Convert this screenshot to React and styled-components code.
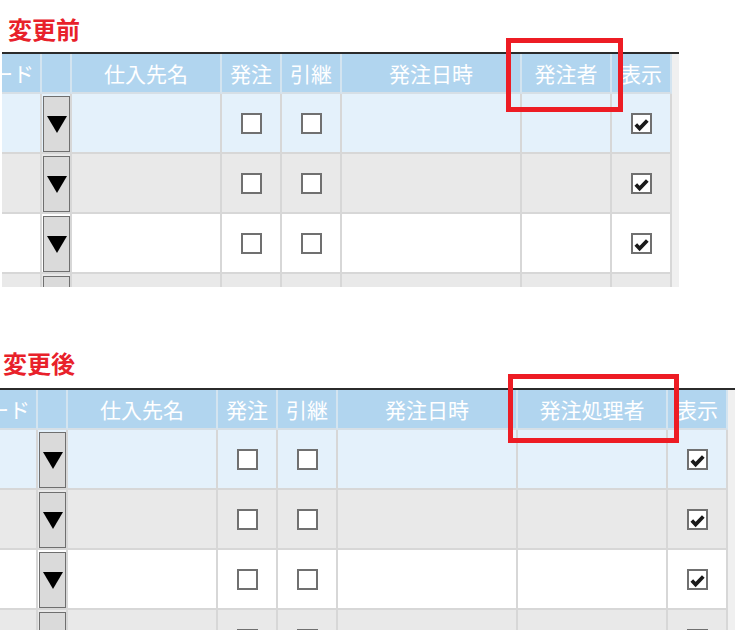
import React from 'react'
import styled, { createGlobalStyle } from 'styled-components'

const GlobalStyle = createGlobalStyle`
  html, body {
    margin: 0;
    padding: 0;
    background: #fff;
    overflow: hidden;
  }
  body {
    font-family: "Noto Sans CJK JP", "Noto Sans", sans-serif;
  }
`

const Page = styled.div`
  width: 735px;
  height: 630px;
  overflow: hidden;
`

const Section = styled.section`
  position: relative;
  padding-top: ${p => p.$top}px;
  padding-left: ${p => p.$left}px;`

const Title = styled.h2`
  margin: 0 0 ${p => p.$gap}px ${p => p.$x}px;
  font-size: 24px;
  line-height: 24px;
  font-weight: 700;
  color: #e8212a;`

const Frame = styled.div`
  display: flex;
  width: ${p => p.$width}px;
  height: ${p => p.$height}px;
  border-top: 2px solid #2b2b2b;
  overflow: hidden;`

const Grid = styled.div`
  display: grid;
  grid-template-columns: ${p => p.$cols};
  grid-template-rows: 40px;
  grid-auto-rows: 60px;
  align-content: start;`

const Track = styled.div`
  flex: 1;
  background: #f0f0f0;`

const HeadCell = styled.div`
  box-sizing: border-box;
  display: flex;
  align-items: center;
  justify-content: ${p => (p.$clip ? 'flex-end' : 'center')};
  padding-right: ${p => (p.$clip ? 6 : 0)}px;
  overflow: hidden;
  white-space: nowrap;
  background: #b1d5ef;
  color: #fff;
  font-size: 21px;
  border-right: 2px solid #d3e4f0;
  border-bottom: 2px solid #d6dfe6;`

const tones = {
  sel: '#e4f1fb',
  alt: '#e9e9e9',
  plain: '#ffffff',
}

const Cell = styled.div`
  box-sizing: border-box;
  display: flex;
  align-items: ${p => (p.$top ? 'flex-start' : 'center')};
  justify-content: ${p => (p.$top ? 'flex-start' : 'center')};
  padding: ${p => (p.$top ? '2px 0 0 1px' : '0')};
  background: ${p => tones[p.$tone]};
  border-right: 2px solid #d7d7d7;
  border-bottom: 2px solid #d7d7d7;`

const DropButton = styled.div`
  box-sizing: border-box;
  width: 27px;
  height: 56px;
  display: flex;
  align-items: center;
  justify-content: center;
  background: #dadada;
  border: 1px solid #6f6f6f;`

const Arrow = styled.span`
  width: 0;
  height: 0;
  border-left: 10px solid transparent;
  border-right: 10px solid transparent;
  border-top: 17px solid #000;`

const Box = styled.div`
  box-sizing: border-box;
  width: 21px;
  height: 21px;
  background: #fff;
  border: 2px solid #707070;
  display: flex;
  align-items: center;
  justify-content: center;`

const Highlight = styled.div`
  position: absolute;
  box-sizing: border-box;
  left: ${p => p.$x}px;
  top: ${p => p.$y}px;
  width: ${p => p.$w}px;
  height: ${p => p.$h}px;
  border: 5px solid #ed1c24;
  pointer-events: none;`

function Check() {
  return (
    <svg width="17" height="17" viewBox="0 0 17 17">
      <path d="M2.8 9.6 L6.6 13.6 L14.3 5.4" fill="none" stroke="#1a1a1a" strokeWidth="3.7" />
    </svg>
  )
}

const rows = ['sel', 'alt', 'plain', 'alt']

function Table({ first, person, personWidth, width, height }) {
  const cols = `${first}px 30px 150px 60px 60px 180px ${personWidth}px 60px`
  const heads = ['コード', '', '仕入先名', '発注', '引継', '発注日時', person, '表示']
  return (
    <Frame $width={width} $height={height}>
      <Grid $cols={cols}>
        {heads.map((h, i) => (
          <HeadCell key={i} $clip={i === 0}>{h}</HeadCell>
        ))}
        {rows.map((tone, r) => (
          <React.Fragment key={r}>
            <Cell $tone={tone} />
            <Cell $tone={tone} $top>
              <DropButton><Arrow /></DropButton>
            </Cell>
            <Cell $tone={tone} />
            <Cell $tone={tone}><Box /></Cell>
            <Cell $tone={tone}><Box /></Cell>
            <Cell $tone={tone} />
            <Cell $tone={tone} />
            <Cell $tone={tone}><Box><Check /></Box></Cell>
          </React.Fragment>
        ))}
      </Grid>
      <Track />
    </Frame>
  )
}

export default function App() {
  return (
    <Page>
      <GlobalStyle />
      <Section $top={17} $left={2}>
        <Title $x={6} $gap={11}>変更前</Title>
        <Table first={40} person="発注者" personWidth={90} width={677} height={233} />
        <Highlight $x={506} $y={38} $w={117} $h={74} />
      </Section>
      <Section $top={64} $left={0}>
        <Title $x={3} $gap={13}>変更後</Title>
        <Table first={38} person="発注処理者" personWidth={150} width={735} height={260} />
        <Highlight $x={508} $y={87} $w={171} $h={69} />
      </Section>
    </Page>
  )
}
